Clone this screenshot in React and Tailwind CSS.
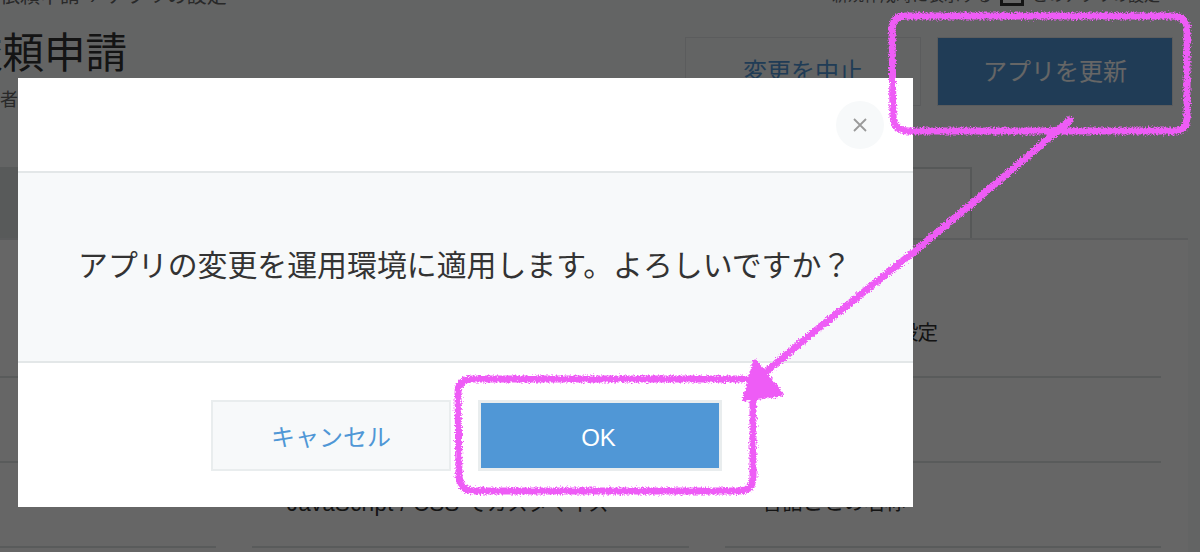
const cjk = "font-['Liberation_Sans','Noto_Sans_CJK_JP',sans-serif]";

const rows = [
    ["", "", <span className="tracking-[-1px]">カスタマイズの設定</span>],
    ["", "", ""],
    ["", <><span className="text-[22px] tracking-[0.4px]">JavaScript / CSS </span>でカスタマイズ</>, "言語ごとの名称"],
];

// pink hand-drawn marks that sit over the dialog
const Marks = () => (
    <svg className="absolute inset-0" width="1200" height="552" viewBox="0 0 1200 552" fill="none">
        <defs>
            <filter id="rough" x="-5%" y="-5%" width="110%" height="110%">
                <feTurbulence type="fractalNoise" baseFrequency="0.6" numOctaves="2" seed="4" />
                <feDisplacementMap in="SourceGraphic" scale="6" xChannelSelector="R" yChannelSelector="G" />
            </filter>
        </defs>
        <g filter="url(#rough)" stroke="#ee5cf6" strokeLinecap="round" strokeLinejoin="round">
            <path d="M1187 71 V30 Q1187 16 1172 16 H906 Q892 16 892 30 L893 116 Q894 131 909 131 H1174 Q1187 131 1187 118 V77" strokeWidth="7" />
            <path d="M1070 120 L1000 180 L915 251 L820 327 L758 378" strokeWidth="7" />
            <path d="M745 379 H473 Q458 379 458 393 L459 476 Q460 491 475 491 H738 Q753 491 753 477 V398" strokeWidth="7" />
            <path d="M755 362 L781 394 L745 399 Z" fill="#ee5cf6" strokeWidth="5" />
        </g>
    </svg>
);

const Dialog = () => (
    <div className="absolute inset-0 bg-black/60 pl-[18px] pt-[78px]">
        <div className="w-[895px] h-[429px] bg-white flex flex-col">
            <div className="h-[95px] flex justify-end pt-[23px] pr-[29px] border-b-2 border-[#e3e7e8]">
                <button className="w-12 h-12 rounded-full bg-[#f7f9fa] flex items-center justify-center">
                    <svg width="14" height="14" viewBox="0 0 14 14" stroke="#9a9a9a" strokeWidth="1.8">
                        <path d="M1 1 L13 13 M13 1 L1 13" />
                    </svg>
                </button>
            </div>
            <div className="h-[190px] bg-[#f7f9fa] border-b-2 border-[#e3e7e8] flex items-center pl-[60px] pb-[2px]">
                <p className="text-[29.9px] text-[#333] whitespace-nowrap">アプリの変更を運用環境に適用します。よろしいですか？</p>
            </div>
            <div className="flex gap-[27px] pl-[193px] pt-[37px]">
                <button className="w-[240px] h-[71px] pt-[4px] bg-[#f7f9fa] border-2 border-[#e9edee] text-[#4f97d6] text-[24px]">キャンセル</button>
                <button className="w-[244px] h-[71px] pt-[4px] pr-[3px] bg-[#5097d6] border-[3px] border-[#e9edee] text-white text-[24px]">OK</button>
            </div>
        </div>
    </div>
);

export default function App() {
    return (
        <div className={`relative w-[1200px] h-[552px] overflow-hidden bg-[#f7f9fa] text-[#333] ${cjk}`}>
            {/* top edge, cut off by the screenshot */}
            <div className="h-[6px] flex justify-between items-end overflow-hidden text-[20px] leading-[20px] whitespace-nowrap">
                <span className="text-[#666]">依頼申請<span className="mx-[10px]">›</span>アプリの設定</span>
                <div className="flex items-end gap-[8px] pr-[40px] text-[16px]">
                    <span className="text-[#666]">新規作成時に表示する</span>
                    <span className="w-[24px] h-[24px] border-[3px] border-[#333] bg-white"></span>
                    <span className="text-[#666]">このアプリの設定</span>
                </div>
            </div>

            <div className="h-[161px] flex justify-between">
                <div className="ml-[-39px] pt-[21px]">
                    <h1 className="text-[41.5px] leading-[54px] whitespace-nowrap">依頼申請</h1>
                    <p className="ml-[39px] mt-[6px] text-[18px] text-[#666] whitespace-nowrap">者</p>
                </div>
                <div className="flex gap-[16px] pt-[31px] pr-[27px]">
                    <button className="w-[236px] h-[69px] bg-[#f7f9fa] border border-[#e3e7e8] text-[#5097d6] text-[24px]">変更を中止</button>
                    <button className="w-[236px] h-[69px] pt-[1px] bg-[#5097d6] border border-[#e3e7e8] text-white text-[24px]">アプリを更新</button>
                </div>
            </div>

            <div className="h-[71px] flex">
                <div className="w-[500px] bg-[#dce1e0]"></div>
                <div className="w-[472px] bg-white border-t-2 border-r-2 border-[#d8dcdc]"></div>
            </div>

            <div className="w-[1188px] h-[314px] bg-white border-t-2 border-[#e3e7e8] pt-[53px] pr-[27px]">
                {rows.map((row, i) => (
                    <div key={i} className="grid grid-cols-[216px_437px_436px] gap-x-[36px] h-[85px]">
                        {row.map((label, j) => (
                            <div key={j} className="border-b-2 border-[#dfe3e3] flex items-center pb-[2px] text-[20.5px] whitespace-nowrap">
                                <span className={j === 1 ? "pl-[35px]" : "pl-[37px]"}>{label}</span>
                            </div>
                        ))}
                    </div>
                ))}
            </div>

            <Dialog />
            <Marks />
        </div>
    );
}
